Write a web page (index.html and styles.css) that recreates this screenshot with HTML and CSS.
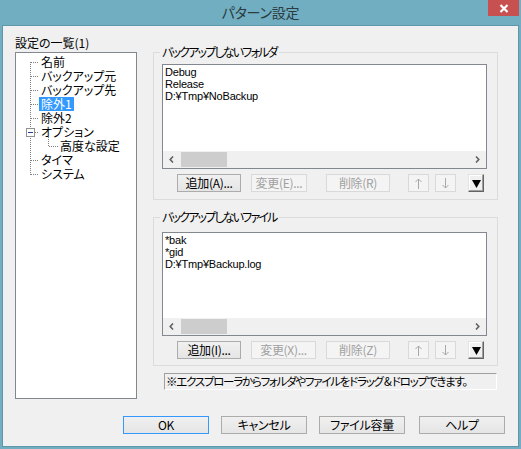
FILE: index.html
```html
<!DOCTYPE html>
<html lang="ja">
<head>
<meta charset="utf-8">
<title>パターン設定</title>
<link rel="stylesheet" href="styles.css">
</head>
<body>
<div class="window">
  <div class="titlebar">
    <div class="title">パターン設定</div>
    <div class="close">
      <svg width="10" height="9" viewBox="0 0 10 9"><path d="M1.5 1 L8.5 8 M8.5 1 L1.5 8" stroke="#fff" stroke-width="2.2" fill="none"/></svg>
    </div>
  </div>
  <div class="client">
    <div class="main">
      <div class="left">
        <div class="tree-label">設定の一覧(1)</div>
        <div class="tree">
          <div class="tree-body">
            <svg class="tree-lines" width="119" height="130" viewBox="0 0 119 130" shape-rendering="crispEdges">
              <g stroke="#808080" stroke-width="1" stroke-dasharray="1 1" fill="none">
                <path d="M14.5 9 V122"/>
                <path d="M15 9.5 H23"/>
                <path d="M15 23.5 H23"/>
                <path d="M15 37.5 H23"/>
                <path d="M15 51.5 H23"/>
                <path d="M15 65.5 H23"/>
                <path d="M19 79.5 H23"/>
                <path d="M15 107.5 H23"/>
                <path d="M15 121.5 H23"/>
                <path d="M32.5 84 V94"/>
                <path d="M33 93.5 H42"/>
              </g>
              <rect x="10.5" y="75.5" width="8" height="8" fill="#fff" stroke="#919191"/>
              <path d="M12 79.5 H17" stroke="#1f3f8f" stroke-width="1"/>
            </svg>
            <ul class="nodes">
              <li class="node"><span class="node-text">名前</span></li>
              <li class="node"><span class="node-text">バックアップ元</span></li>
              <li class="node"><span class="node-text">バックアップ先</span></li>
              <li class="node"><span class="node-text selected">除外1</span></li>
              <li class="node"><span class="node-text">除外2</span></li>
              <li class="node"><span class="node-text">オプション</span></li>
              <li class="node sub"><span class="node-text">高度な設定</span></li>
              <li class="node"><span class="node-text">タイマ</span></li>
              <li class="node"><span class="node-text">システム</span></li>
            </ul>
          </div>
        </div>
      </div>
      <div class="right">
        <fieldset class="group group-folders">
          <legend>バックアップしないフォルダ</legend>
          <div class="listbox">
            <div class="items">
              <div class="item">Debug</div>
              <div class="item">Release</div>
              <div class="item">D:¥Tmp¥NoBackup</div>
            </div>
            <div class="hscroll">
              <span class="arrow"><svg width="5" height="7" viewBox="0 0 5 7"><path d="M4 0.5 L1.2 3.5 L4 6.5" stroke="#606060" stroke-width="1.6" fill="none"/></svg></span>
              <span class="track"><span class="thumb"></span></span>
              <span class="arrow"><svg width="5" height="7" viewBox="0 0 5 7"><path d="M1 0.5 L3.8 3.5 L1 6.5" stroke="#606060" stroke-width="1.6" fill="none"/></svg></span>
            </div>
          </div>
          <div class="btnrow">
            <button class="btn b-add">追加(A)...</button>
            <button class="btn b-edit disabled">変更(E)...</button>
            <button class="btn b-del disabled">削除(R)</button>
            <button class="btn b-up disabled"><svg width="7" height="11" viewBox="0 0 7 11"><path d="M3.5 1 V11 M0.5 4 L3.5 1 L6.5 4" stroke="#a8a8a8" stroke-width="1" fill="none"/></svg></button>
            <button class="btn b-down disabled"><svg width="7" height="11" viewBox="0 0 7 11"><path d="M3.5 0 V10 M0.5 7 L3.5 10 L6.5 7" stroke="#a8a8a8" stroke-width="1" fill="none"/></svg></button>
            <button class="btn b-menu"><svg width="9" height="8" viewBox="0 0 9 8"><path d="M0 0 H9 L4.5 8 Z" fill="#000"/></svg></button>
          </div>
        </fieldset>
        <fieldset class="group group-files">
          <legend>バックアップしないファイル</legend>
          <div class="listbox">
            <div class="items">
              <div class="item">*bak</div>
              <div class="item">*gid</div>
              <div class="item">D:¥Tmp¥Backup.log</div>
            </div>
            <div class="hscroll">
              <span class="arrow"><svg width="5" height="7" viewBox="0 0 5 7"><path d="M4 0.5 L1.2 3.5 L4 6.5" stroke="#606060" stroke-width="1.6" fill="none"/></svg></span>
              <span class="track"><span class="thumb"></span></span>
              <span class="arrow"><svg width="5" height="7" viewBox="0 0 5 7"><path d="M1 0.5 L3.8 3.5 L1 6.5" stroke="#606060" stroke-width="1.6" fill="none"/></svg></span>
            </div>
          </div>
          <div class="btnrow">
            <button class="btn b-add">追加(I)...</button>
            <button class="btn b-edit wide disabled">変更(X)...</button>
            <button class="btn b-del disabled">削除(Z)</button>
            <button class="btn b-up disabled"><svg width="7" height="11" viewBox="0 0 7 11"><path d="M3.5 1 V11 M0.5 4 L3.5 1 L6.5 4" stroke="#a8a8a8" stroke-width="1" fill="none"/></svg></button>
            <button class="btn b-down disabled"><svg width="7" height="11" viewBox="0 0 7 11"><path d="M3.5 0 V10 M0.5 7 L3.5 10 L6.5 7" stroke="#a8a8a8" stroke-width="1" fill="none"/></svg></button>
            <button class="btn b-menu"><svg width="9" height="8" viewBox="0 0 9 8"><path d="M0 0 H9 L4.5 8 Z" fill="#000"/></svg></button>
          </div>
        </fieldset>
        <div class="hint">※エクスプローラからフォルダやファイルをドラッグ &amp; ドロップできます。</div>
      </div>
    </div>
    <div class="footer">
      <button class="btn fbtn default">OK</button>
      <button class="btn fbtn">キャンセル</button>
      <button class="btn fbtn">ファイル容量</button>
      <button class="btn fbtn last">ヘルプ</button>
    </div>
  </div>
</div>
</body>
</html>
```

FILE: styles.css
```css
html, body {
  margin: 0;
  padding: 0;
}
body {
  width: 521px;
  height: 449px;
  background: #71aec2;
  font-family: "Noto Sans CJK JP", "Noto Sans", sans-serif;
  font-size: 12px;
  font-feature-settings: "palt" 1;
  color: #000;
  overflow: hidden;
}
.window {
  width: 521px;
  height: 449px;
  display: flex;
  flex-direction: column;
}
.titlebar {
  height: 25px;
  display: grid;
  grid-template-columns: 1fr auto 1fr;
  align-items: start;
}
.title {
  grid-column: 2;
  font-size: 14px;
  letter-spacing: -0.2px;
  line-height: 24px;
  color: #2b3b40;
}
.close {
  grid-column: 3;
  justify-self: end;
  width: 31px;
  height: 16px;
  margin-right: 2px;
  background: #c75050;
  display: flex;
  align-items: center;
  justify-content: center;
}
.client {
  box-sizing: border-box;
  height: 422px;
  margin: 0 2px;
  border: 1px solid #5e97aa;
  background: #f0f0f0;
  display: flex;
  flex-direction: column;
}
.main {
  display: flex;
  align-items: flex-start;
}
.left {
  margin-left: 12px;
  padding-top: 10px;
}
.tree-label {
  line-height: 14px;
  height: 14px;
  white-space: nowrap;
}
.tree {
  box-sizing: border-box;
  margin-top: 2px;
  width: 122px;
  height: 347px;
  border: 1px solid #828790;
  background: #fff;
}
.tree-body {
  display: grid;
}
.tree-lines {
  grid-area: 1 / 1;
  display: block;
}
.nodes {
  grid-area: 1 / 1;
  list-style: none;
  margin: 0;
  padding: 2px 0 0 0;
}
.node {
  height: 14px;
  line-height: 14px;
  padding-left: 23px;
  white-space: nowrap;
}
.node.sub {
  padding-left: 42px;
}
.node-text {
  display: inline-block;
  vertical-align: top;
  padding: 0 2px;
  height: 14px;
}
.node-text.selected {
  background: #3399ff;
  color: #fff;
}
.right {
  margin-left: 16px;
  padding-top: 19px;
  display: flex;
  flex-direction: column;
}
.group {
  box-sizing: border-box;
  width: 345px;
  margin: 0;
  min-width: 0;
  border: 1px solid #dcdcdc;
  padding: 5px 10px 7px 8px;
}
.group legend {
  padding: 0 2px;
  margin-left: -2px;
  line-height: 14px;
  height: 14px;
  letter-spacing: -1.8px;
  white-space: nowrap;
}
.group-files {
  margin-top: 10px;
  padding-top: 8px;
  padding-bottom: 6px;
}
.listbox {
  box-sizing: border-box;
  width: 325px;
  height: 105px;
  border: 1px solid #828790;
  background: #fff;
  display: flex;
  flex-direction: column;
}
.group-files .listbox {
  height: 104px;
}
.items {
  flex: 1;
  padding: 1px 0 0 2px;
  font-family: "Liberation Sans", "Noto Sans CJK JP", sans-serif;
  font-size: 11px;
  letter-spacing: -0.2px;
  white-space: nowrap;
}
.item {
  height: 12px;
  line-height: 12px;
}
.hscroll {
  height: 17px;
  background: #f0f0f0;
  display: flex;
}
.arrow {
  width: 17px;
  display: flex;
  align-items: center;
  justify-content: center;
}
.track {
  flex: 1;
  display: flex;
}
.thumb {
  width: 46px;
  height: 15px;
  margin: 1px 0 0 1px;
  background: #cdcdcd;
}
.btnrow {
  display: flex;
  margin-top: 5px;
  height: 18px;
}
.btn {
  appearance: none;
  box-sizing: border-box;
  height: 18px;
  margin: 0;
  padding: 0;
  font-family: inherit;
  font-size: 12px;
  font-feature-settings: "palt" 1;
  letter-spacing: -0.3px;
  line-height: 16px;
  color: #000;
  border: 1px solid #acacac;
  background: linear-gradient(#f0f0f0, #e5e5e5);
  display: flex;
  align-items: center;
  justify-content: center;
  white-space: nowrap;
}
.btn.disabled {
  color: #a0a0a0;
  border-color: #d9d9d9;
  background: #f4f4f4;
}
.b-add {
  margin-left: 15px;
  width: 64px;
}
.b-edit {
  margin-left: 10px;
  width: 56px;
}
.b-edit.wide {
  width: 65px;
}
.b-del {
  margin-left: 19px;
  width: 64px;
}
.b-edit.wide + .b-del {
  margin-left: 10px;
}
.b-up {
  margin-left: 18px;
  width: 21px;
}
.b-down {
  margin-left: 6px;
  width: 21px;
}
.b-menu {
  margin-left: 12px;
  width: 16px;
  border-color: #e3e3e3 #646464 #646464 #e3e3e3;
  background: #f0f0f0;
  box-shadow: inset -1px -1px 0 #a0a0a0, inset 1px 1px 0 #ffffff;
  padding-top: 1px;
}
.hint {
  box-sizing: border-box;
  margin-top: 7px;
  margin-left: 11px;
  width: 333px;
  height: 17px;
  line-height: 15px;
  padding-left: 1px;
  border: 1px solid;
  border-color: #a0a0a0 #ffffff #ffffff #a0a0a0;
  font-size: 11.5px;
  letter-spacing: -1.25px;
  white-space: nowrap;
}
.footer {
  display: flex;
  margin-top: 17px;
  padding-left: 120px;
}
.fbtn {
  width: 86px;
  margin-left: 12px;
}
.fbtn.default {
  margin-left: 0;
  border-color: #3399ff;
}
.fbtn.last {
  margin-left: 14px;
}
```
